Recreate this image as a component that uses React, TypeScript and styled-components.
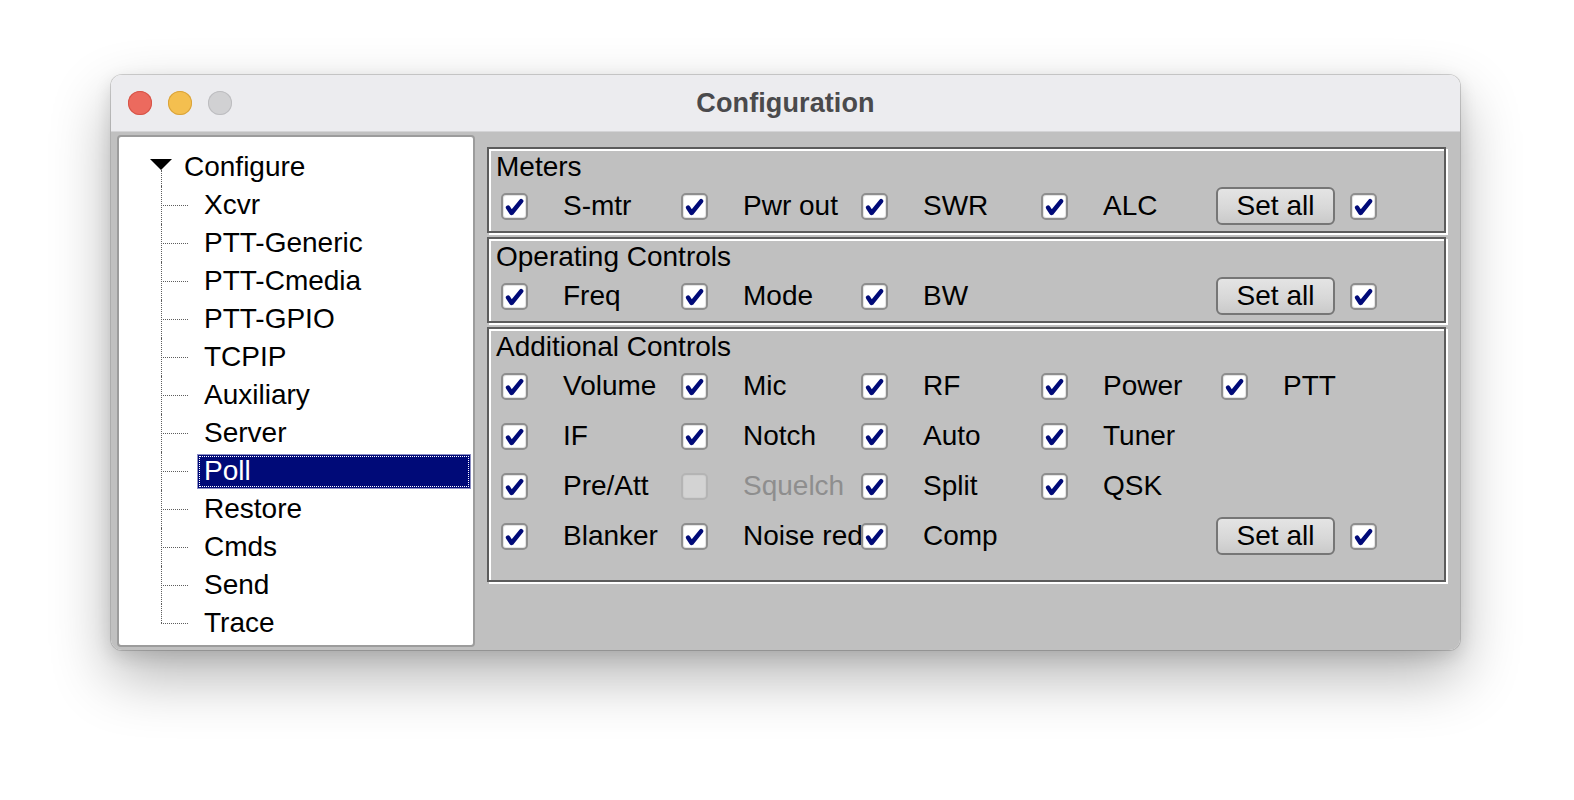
import React from 'react';
import styled, { createGlobalStyle } from 'styled-components';

const Global = createGlobalStyle`
  html, body { margin: 0; padding: 0; background: #ffffff; }
  body { font-family: "Liberation Sans", Arial, Helvetica, sans-serif; }
  * { box-sizing: border-box; }
`;

const Stage = styled.div`
  width: 1574px;
  height: 800px;
  padding: 75px 0 0 111px;
  background: #ffffff;
`;

const Window = styled.div`
  width: 1349px;
  height: 575px;
  border-radius: 11px;
  overflow: hidden;
  display: flex;
  flex-direction: column;
  box-shadow: 0 0 0 1px rgba(0, 0, 0, 0.16), 0 26px 60px rgba(0, 0, 0, 0.3),
    0 6px 18px rgba(0, 0, 0, 0.12);
`;

const TitleBar = styled.div`
  height: 57px;
  flex: none;
  background: #ececef;
  border-bottom: 1px solid #d4d4d6;
  display: grid;
  grid-template-columns: 1fr auto 1fr;
  align-items: center;
`;

const Lights = styled.div`
  display: flex;
  gap: 16px;
  padding-left: 17px;
`;

const Light = styled.span<{ $color: string; $edge: string }>`
  width: 24px;
  height: 24px;
  border-radius: 50%;
  background: ${(p) => p.$color};
  box-shadow: inset 0 0 0 1px ${(p) => p.$edge};
`;

const Title = styled.div`
  font-family: "Liberation Sans", Arial, sans-serif;
  font-weight: 700;
  font-size: 27px;
  color: #4a4a4c;
  letter-spacing: 0.1px;
`;

const Body = styled.div`
  flex: 1;
  display: flex;
  background: #c0c0c0;
  padding: 3px 0 3px 6px;
`;

const Tree = styled.div`
  width: 358px;
  flex: none;
  background: #ffffff;
  border: 2px solid #9c9c9c;
  border-radius: 4px;
  padding-top: 11px;
  font-size: 28px;
  color: #000;
`;

const RootRow = styled.div`
  height: 38px;
  display: flex;
  align-items: stretch;
  padding-left: 31px;
`;

const Toggle = styled.div`
  width: 22px;
  position: relative;
  &::before {
    content: '';
    position: absolute;
    left: 0;
    top: 11px;
    border-left: 11px solid transparent;
    border-right: 11px solid transparent;
    border-top: 11px solid #000;
  }
  &::after {
    content: '';
    position: absolute;
    left: 11px;
    top: 22px;
    bottom: 0;
    border-left: 1px dotted #5e5e5e;
  }
`;

const RootLabel = styled.span`
  margin-left: 12px;
  display: flex;
  align-items: center;
`;

const ChildRow = styled.div`
  height: 38px;
  display: flex;
  align-items: stretch;
  padding-left: 42px;
`;

const Guide = styled.div<{ $last?: boolean }>`
  width: 27px;
  flex: none;
  position: relative;
  &::before {
    content: '';
    position: absolute;
    left: 0;
    top: 0;
    bottom: ${(p) => (p.$last ? '50%' : '0')};
    border-left: 1px dotted #5e5e5e;
  }
  &::after {
    content: '';
    position: absolute;
    left: 0;
    right: 0;
    top: 50%;
    border-top: 1px dotted #5e5e5e;
  }
`;

const ItemLabel = styled.span<{ $selected?: boolean }>`
  margin-left: 9px;
  margin-right: 2px;
  padding-left: 7px;
  align-self: center;
  height: 35px;
  display: flex;
  align-items: center;
  flex: 1;
  background: ${(p) => (p.$selected ? '#000a78' : 'transparent')};
  color: ${(p) => (p.$selected ? '#ffffff' : '#000000')};
  box-shadow: ${(p) => (p.$selected ? 'inset 0 0 0 1px #8e90c4' : 'none')};
  outline: ${(p) => (p.$selected ? '1px dotted #ffffff' : 'none')};
  outline-offset: -3px;
`;

const Panel = styled.div`
  flex: 1;
  padding: 12px 14px 0 12px;
  display: flex;
  flex-direction: column;
  gap: 4px;
`;

const Group = styled.div<{ $padBottom?: number }>`
  border: 2px solid #5c5c5c;
  box-shadow: inset 2px 2px 0 #ffffff, 2px 2px 0 #ffffff;
  padding: 2px 0 ${(p) => p.$padBottom ?? 0}px 0;
  font-size: 28px;
  color: #000;
`;

const GroupLabel = styled.div`
  height: 30px;
  line-height: 31px;
  margin-left: 7px;
`;

const Row = styled.div`
  height: 50px;
  padding-left: 12px;
  display: grid;
  grid-template-columns: repeat(4, 180px) 1fr;
  align-items: center;
`;

const Cell = styled.div`
  display: flex;
  align-items: center;
  min-width: 0;
`;

const Box = styled.span<{ $disabled?: boolean }>`
  width: 27px;
  height: 27px;
  flex: none;
  border-radius: 5px;
  border: 2px solid ${(p) => (p.$disabled ? '#b4b4b4' : '#8e8e8e')};
  background: ${(p) => (p.$disabled ? '#d3d3d3' : '#ffffff')};
  box-shadow: inset 0 0 0 1px ${(p) => (p.$disabled ? '#cdcdcd' : '#e4e4e4')};
  display: flex;
  align-items: center;
  justify-content: center;
  position: relative;
  z-index: 1;
`;

const CellLabel = styled.span<{ $disabled?: boolean }>`
  margin-left: 35px;
  white-space: nowrap;
  color: ${(p) => (p.$disabled ? '#8e8e8e' : '#000')};
`;

const SetAllCell = styled.div`
  display: flex;
  align-items: center;
  gap: 15px;
  margin-left: -5px;
`;

const Button = styled.button`
  width: 119px;
  height: 38px;
  border: 2px solid #767676;
  border-radius: 6px;
  background: linear-gradient(#e4e4e4, #d8d8d8 55%, #cacaca);
  font-family: "Liberation Sans", Arial, sans-serif;
  font-size: 28px;
  color: #000;
  padding: 0;
  display: flex;
  align-items: center;
  justify-content: center;
`;

const Check: React.FC<{ checked?: boolean; disabled?: boolean }> = ({ checked = true, disabled }) => (
  <Box $disabled={disabled}>
    {checked && !disabled && (
      <svg width="23" height="23" viewBox="0 0 23 23">
        <path
          d="M5 12.5 L8.6 18 L18.2 6.2"
          fill="none"
          stroke="#000a78"
          strokeWidth="4.4"
          strokeLinecap="round"
          strokeLinejoin="round"
        />
      </svg>
    )}
  </Box>
);

type Item = { label: string; checked?: boolean; disabled?: boolean } | null;

const OptionRow: React.FC<{ items: Item[]; setAll?: boolean }> = ({ items, setAll }) => (
  <Row>
    {items.map((it, i) =>
      it ? (
        <Cell key={i}>
          <Check checked={it.checked !== false} disabled={it.disabled} />
          <CellLabel $disabled={it.disabled}>{it.label}</CellLabel>
        </Cell>
      ) : (
        <Cell key={i} />
      )
    )}
    {setAll && (
      <SetAllCell>
        <Button>Set all</Button>
        <Check />
      </SetAllCell>
    )}
  </Row>
);

const treeItems = [
  'Xcvr',
  'PTT-Generic',
  'PTT-Cmedia',
  'PTT-GPIO',
  'TCPIP',
  'Auxiliary',
  'Server',
  'Poll',
  'Restore',
  'Cmds',
  'Send',
  'Trace',
];

export default function App() {
  return (
    <>
      <Global />
      <Stage>
        <Window>
          <TitleBar>
            <Lights>
              <Light $color="#ec6a5e" $edge="#d65448" />
              <Light $color="#f4bf4f" $edge="#d9a33b" />
              <Light $color="#d1d1d3" $edge="#bdbdc0" />
            </Lights>
            <Title>Configuration</Title>
            <div />
          </TitleBar>
          <Body>
            <Tree>
              <RootRow>
                <Toggle />
                <RootLabel>Configure</RootLabel>
              </RootRow>
              {treeItems.map((t, i) => (
                <ChildRow key={t}>
                  <Guide $last={i === treeItems.length - 1} />
                  <ItemLabel $selected={t === 'Poll'}>{t}</ItemLabel>
                </ChildRow>
              ))}
            </Tree>
            <Panel>
              <Group>
                <GroupLabel>Meters</GroupLabel>
                <OptionRow
                  items={[{ label: 'S-mtr' }, { label: 'Pwr out' }, { label: 'SWR' }, { label: 'ALC' }]}
                  setAll
                />
              </Group>
              <Group>
                <GroupLabel>Operating Controls</GroupLabel>
                <OptionRow items={[{ label: 'Freq' }, { label: 'Mode' }, { label: 'BW' }, null]} setAll />
              </Group>
              <Group $padBottom={19}>
                <GroupLabel>Additional Controls</GroupLabel>
                <OptionRow
                  items={[
                    { label: 'Volume' },
                    { label: 'Mic' },
                    { label: 'RF' },
                    { label: 'Power' },
                    { label: 'PTT' },
                  ]}
                />
                <OptionRow items={[{ label: 'IF' }, { label: 'Notch' }, { label: 'Auto' }, { label: 'Tuner' }]} />
                <OptionRow
                  items={[
                    { label: 'Pre/Att' },
                    { label: 'Squelch', checked: false, disabled: true },
                    { label: 'Split' },
                    { label: 'QSK' },
                  ]}
                />
                <OptionRow
                  items={[{ label: 'Blanker' }, { label: 'Noise red' }, { label: 'Comp' }, null]}
                  setAll
                />
              </Group>
            </Panel>
          </Body>
        </Window>
      </Stage>
    </>
  );
}
